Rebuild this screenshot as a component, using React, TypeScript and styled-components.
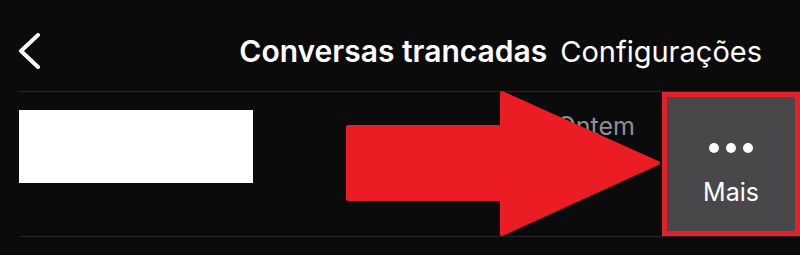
import React from "react";
import styled, { createGlobalStyle } from "styled-components";

const Global = createGlobalStyle`
  html, body { margin: 0; padding: 0; background: #0b0b0b; }
  body { font-family: Inter, "Noto Sans", "Liberation Sans", sans-serif; color: #fff; overflow: hidden; }
`;

const Page = styled.div`
  position: relative;
  width: 800px;
  height: 255px;
  background: #0b0b0b;
  overflow: hidden;
`;

const Header = styled.header`
  display: flex;
  align-items: center;
  height: 91px;
  box-sizing: border-box;
  padding: 10px 38px 0 18px;
`;

const BackButton = styled.button`
  display: flex;
  align-items: center;
  justify-content: center;
  width: 24px;
  height: 36px;
  padding: 0;
  border: none;
  background: none;
  color: #fff;
`;

const TitleGroup = styled.div`
  margin-left: auto;
  display: flex;
  align-items: baseline;
  gap: 13px;
  line-height: 1;
`;

const Title = styled.span<{ $bold?: boolean }>`
  font-size: ${(p) => (p.$bold ? 30 : 29)}px;
  font-weight: ${(p) => (p.$bold ? 600 : 400)};
  color: #fff;
`;

const Divider = styled.div<{ $inset: number }>`
  height: 1px;
  margin-left: ${(p) => p.$inset}px;
  background: #262628;
`;

const Row = styled.div`
  display: flex;
  height: 144px;
`;

const Redacted = styled.div`
  align-self: flex-start;
  margin: 18px 0 0 19px;
  width: 234px;
  height: 73px;
  background: #fff;
`;

const Time = styled.span`
  align-self: flex-start;
  margin: 22px 27px 0 auto;
  font-size: 25px;
  line-height: 1;
  color: #8e8e93;
`;

const MoreButton = styled.button`
  display: flex;
  flex-direction: column;
  align-items: center;
  justify-content: flex-start;
  width: 138px;
  height: 144px;
  box-sizing: border-box;
  padding: 46px 0 0;
  border: 5px solid #e3212b;
  background: #48484a;
  color: #fff;
  font-family: inherit;
`;

const Dots = styled.div`
  display: flex;
  gap: 7px;
`;

const Dot = styled.span`
  width: 10px;
  height: 10px;
  border-radius: 50%;
  background: #fff;
`;

const MoreLabel = styled.span`
  margin-top: 27px;
  font-size: 25px;
  line-height: 1;
`;

const Arrow = styled.svg`
  position: absolute;
  left: 346px;
  top: 91px;
  width: 316px;
  height: 145px;
`;

export default function App() {
  return (
    <Page>
      <Global />
      <Header>
        <BackButton aria-label="Voltar">
          <svg width="24" height="36" viewBox="0 0 24 36" fill="none">
            <path d="M20 2 L3 18 L20 34" stroke="#fff" strokeWidth="4" strokeLinecap="round" strokeLinejoin="round" />
          </svg>
        </BackButton>
        <TitleGroup>
          <Title $bold>Conversas trancadas</Title>
          <Title>Configurações</Title>
        </TitleGroup>
      </Header>
      <Divider $inset={19} />
      <Row>
        <Redacted />
        <Time>Ontem</Time>
        <MoreButton>
          <Dots>
            <Dot />
            <Dot />
            <Dot />
          </Dots>
          <MoreLabel>Mais</MoreLabel>
        </MoreButton>
      </Row>
      <Divider $inset={20} />
      <Arrow viewBox="-2 -2 316 145">
        <polygon
          points="0,34 154,34 154,0 310,70 154,141 154,106 0,106"
          fill="#ec1c24"
          stroke="#ec1c24"
          strokeWidth="4"
          strokeLinejoin="round"
        />
      </Arrow>
    </Page>
  );
}
